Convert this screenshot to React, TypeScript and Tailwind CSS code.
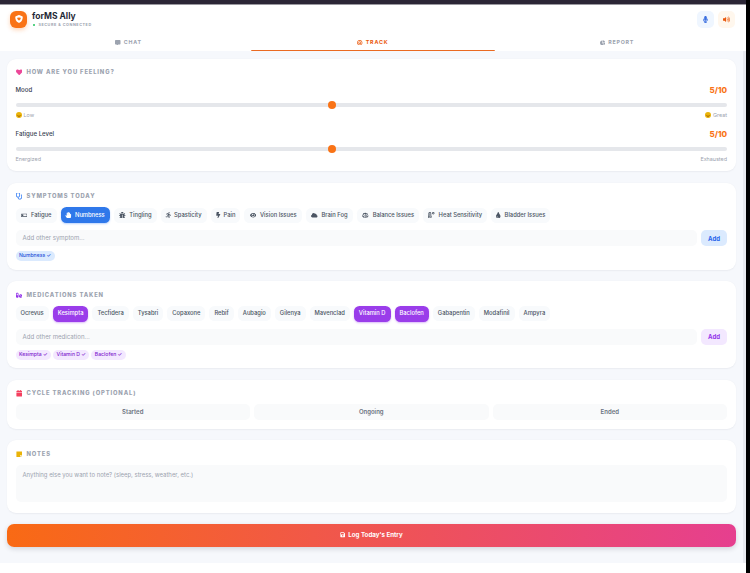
import {
  FaBalanceScale,
  FaBatteryQuarter,
  FaBolt,
  FaBug,
  FaBullseye,
  FaCalendar,
  FaChartPie,
  FaCloud,
  FaCommentAlt,
  FaEye,
  FaHandPaper,
  FaHeart,
  FaMicrophone,
  FaPills,
  FaRunning,
  FaSave,
  FaStethoscope,
  FaStickyNote,
  FaTemperatureHigh,
  FaTint,
  FaVolumeUp,
} from "react-icons/fa";
import { FaShieldHeart } from "react-icons/fa6";
import type { ReactNode } from "react";

const symptoms = [
  { name: "Fatigue", icon: <FaBatteryQuarter />, w: "w-[7px]" },
  { name: "Numbness", icon: <FaHandPaper />, w: "w-[6px]", on: true },
  { name: "Tingling", icon: <FaBug />, w: "w-[7px]" },
  { name: "Spasticity", icon: <FaRunning />, w: "w-[5px]" },
  { name: "Pain", icon: <FaBolt />, w: "w-[4.5px]" },
  { name: "Vision Issues", icon: <FaEye />, w: "w-[7px]" },
  { name: "Brain Fog", icon: <FaCloud />, w: "w-[7.5px]" },
  { name: "Balance Issues", icon: <FaBalanceScale />, w: "w-[7.5px]" },
  { name: "Heat Sensitivity", icon: <FaTemperatureHigh />, w: "w-[7px]" },
  { name: "Bladder Issues", icon: <FaTint />, w: "w-[5px]" },
];

const meds = [
  { name: "Ocrevus" },
  { name: "Kesimpta", on: true },
  { name: "Tecfidera" },
  { name: "Tysabri" },
  { name: "Copaxone" },
  { name: "Rebif" },
  { name: "Aubagio" },
  { name: "Gilenya" },
  { name: "Mavenclad" },
  { name: "Vitamin D", on: true },
  { name: "Baclofen", on: true },
  { name: "Gabapentin" },
  { name: "Modafinil" },
  { name: "Ampyra" },
];

function Card({ title, icon, className, children }: { title: string; icon: ReactNode; className: string; children: ReactNode }) {
  return (
    <section className={`rounded-[9px] bg-white px-[9px] shadow-[0_0.5px_1.5px_rgba(15,23,42,0.05)] ${className}`}>
      <h2 className="flex h-[8px] items-center gap-[4.5px] text-[5.8px] font-extrabold tracking-[0.15em] text-[#9ca3af]">
        <span className="flex text-[6.5px]">{icon}</span>
        {title}
      </h2>
      {children}
    </section>
  );
}

function Face({ mouth }: { mouth: string }) {
  return (
    <svg width="6" height="6" viewBox="0 0 12 12">
      <circle cx="6" cy="6" r="6" fill="#eab308" />
      <path d={mouth} fill="none" stroke="#78350f" strokeWidth="1.4" />
    </svg>
  );
}

function Slider({ label, left, right }: { label: string; left: ReactNode; right: ReactNode }) {
  return (
    <div>
      <div className="flex h-[10px] items-center justify-between">
        <span className="text-[6.1px] font-medium text-[#374151]">{label}</span>
        <span className="text-[8px] font-extrabold text-[#f97316]">5/10</span>
      </div>
      <div className="relative mt-[8.5px] h-[3.5px] rounded-full bg-[#e5e7eb]">
        <span className="absolute left-[312px] top-[-2.5px] h-[8.5px] w-[8.5px] rounded-full bg-[#f97316]" />
      </div>
      <div className="mt-[5px] flex h-[7px] items-center justify-between text-[5.4px] text-[#9ca3af]">
        {left}
        {right}
      </div>
    </div>
  );
}

function Chip({ name, icon, w, on, tone }: { name: string; icon?: ReactNode; w?: string; on?: boolean; tone: "blue" | "purple" }) {
  const active =
    tone === "blue"
      ? "h-[16px] bg-[#2f78ea] text-white shadow-[0_1px_2px_rgba(59,130,246,0.35)]"
      : "h-[16px] bg-[#9a3dea] text-white shadow-[0_1px_2px_rgba(147,51,234,0.35)]";
  return (
    <span
      className={`flex items-center gap-[3.5px] rounded-[5.5px] px-[5px] text-[5.8px] font-medium ${on ? active : "h-[15px] bg-[#f8fafc] text-[#4b5563]"}`}
    >
      {icon && <span className={`flex justify-center text-[6.5px] [&>svg]:shrink-0 ${w}`}>{icon}</span>}
      {name}
    </span>
  );
}

function AddRow({ placeholder, addClass }: { placeholder: string; addClass: string }) {
  return (
    <div className="mt-[7px] flex gap-[4px]">
      <div className="flex h-[16px] flex-1 items-center rounded-[5px] bg-[#f9fafb] px-[7px] text-[6.1px] text-[#9ca3af]">{placeholder}</div>
      <span className={`flex h-[16px] w-[26px] items-center justify-center rounded-[5px] text-[6px] font-bold ${addClass}`}>Add</span>
    </div>
  );
}

function Tab({ label, icon, active }: { label: string; icon: ReactNode; active?: boolean }) {
  return (
    <div
      className={`flex flex-1 items-center justify-center gap-[3px] border-b-[1.7px] pt-[2px] text-[5.3px] font-bold tracking-[0.15em] ${active ? "rounded-b-[1px] border-[#ea6a22] text-[#ea580c]" : "border-transparent text-[#9ca3af]"}`}
    >
      <span className="flex text-[5.5px]">{icon}</span>
      {label}
    </div>
  );
}

export default function App() {
  return (
    <div className="flex h-[573px] w-[750px] overflow-hidden bg-black font-['Inter',sans-serif]">
      <div className="flex w-[745.5px] flex-col bg-white">
        <div className="h-[4px] bg-[#2b2636]" />
        <div className="h-px bg-[#9a99a0]" />

        <header className="flex h-[28px] items-center justify-between pl-[10px] pr-[10.5px]">
          <div className="flex items-center gap-[5px]">
            <div className="flex h-[17px] w-[17px] items-center justify-center rounded-[6px] bg-[#f97316] text-[8px] text-white shadow-[0_2px_4px_rgba(249,115,22,0.3)]">
              <FaShieldHeart />
            </div>
            <div>
              <div className="text-[8.5px] font-bold leading-[10px] text-[#1f2937]">forMS Ally</div>
              <div className="mt-[1.5px] flex items-center gap-[3.5px] text-[3.75px] font-bold leading-[5px] tracking-[0.15em] text-[#9ca3af]">
                <span className="ml-[0.5px] h-[2.4px] w-[2.4px] rounded-full bg-[#22c55e]" />
                SECURE &amp; CONNECTED
              </div>
            </div>
          </div>
          <div className="flex gap-[4px]">
            <span className="flex h-[17px] w-[17px] items-center justify-center rounded-[5px] bg-[#eff6ff] text-[7px] text-[#3b6fe0]">
              <FaMicrophone />
            </span>
            <span className="flex h-[17px] w-[17px] items-center justify-center rounded-[5px] bg-[#fff7ed] text-[7px] text-[#ea580c]">
              <FaVolumeUp />
            </span>
          </div>
        </header>

        <nav className="flex h-[18px] px-[6.5px]">
          <Tab label="CHAT" icon={<FaCommentAlt />} />
          <Tab label="TRACK" icon={<FaBullseye />} active />
          <Tab label="REPORT" icon={<FaChartPie />} />
        </nav>

        <div className="flex min-h-0 flex-1">
          <main className="flex flex-1 flex-col gap-[11.5px] bg-[#f6f8fc] pl-[6.5px] pr-[7px] pt-[8px]">
            <Card title="HOW ARE YOU FEELING?" icon={<FaHeart className="text-[#ec4899]" />} className="h-[112px] pt-[9px]">
              <div className="mt-[8.5px] flex flex-col gap-[10px]">
                <Slider
                  label="Mood"
                  left={<span className="flex items-center gap-[2px]"><Face mouth="M3 7c1.5 2 4.500 2 6 0" />Low</span>}
                  right={<span className="flex items-center gap-[2px]"><Face mouth="M3 7c1.5 2 4.500 2 6 0" />Great</span>}
                />
                <Slider label="Fatigue Level" left={<span>Energized</span>} right={<span>Exhausted</span>} />
              </div>
            </Card>

            <Card title="SYMPTOMS TODAY" icon={<FaStethoscope className="text-[#3b82f6]" />} className="h-[87px] pt-[10px]">
              <div className="mt-[6.5px] flex h-[16px] items-center gap-[4px]">
                {symptoms.map((s) => (
                  <Chip key={s.name} name={s.name} icon={s.icon} w={s.w} on={s.on} tone="blue" />
                ))}
              </div>
              <AddRow placeholder="Add other symptom..." addClass="bg-[#dbeafe] text-[#2563eb]" />
              <div className="mt-[5px] flex">
                <span className="flex h-[10px] items-center rounded-full bg-[#dbeafe] px-[3.5px] text-[5.1px] font-medium text-[#1d4ed8]">Numbness ✓</span>
              </div>
            </Card>

            <Card title="MEDICATIONS TAKEN" icon={<FaPills className="text-[#9333ea]" />} className="h-[87px] pt-[10px]">
              <div className="mt-[6.5px] flex h-[16px] items-center gap-[4px]">
                {meds.map((m) => (
                  <Chip key={m.name} name={m.name} on={m.on} tone="purple" />
                ))}
              </div>
              <AddRow placeholder="Add other medication..." addClass="bg-[#f3e8ff] text-[#9333ea]" />
              <div className="mt-[5px] flex gap-[2px]">
                {["Kesimpta", "Vitamin D", "Baclofen"].map((t) => (
                  <span key={t} className="flex h-[10px] items-center rounded-full bg-[#f3e8ff] px-[3.5px] text-[5.1px] font-medium text-[#7e22ce]">
                    {t} ✓
                  </span>
                ))}
              </div>
            </Card>

            <Card title="CYCLE TRACKING (OPTIONAL)" icon={<FaCalendar className="text-[#f43f5e]" />} className="h-[49px] pt-[10px]">
              <div className="mt-[6px] flex gap-[4px]">
                {["Started", "Ongoing", "Ended"].map((c) => (
                  <span key={c} className="flex h-[16px] flex-1 items-center justify-center rounded-[5px] bg-[#f9fafb] text-[6px] font-semibold text-[#6b7280]">
                    {c}
                  </span>
                ))}
              </div>
            </Card>

            <Card title="NOTES" icon={<FaStickyNote className="text-[#eab308]" />} className="h-[73px] pt-[10px]">
              <div className="mt-[6.5px] h-[37px] rounded-[5px] bg-[#f9fafb] px-[7px] py-[6px] text-[5.95px] leading-[7px] text-[#9ca3af]">
                Anything else you want to note? (sleep, stress, weather, etc.)
              </div>
            </Card>

            <button className="-mt-[1px] flex h-[23px] w-full shrink-0 items-center justify-center gap-[3px] rounded-[7px] bg-linear-to-r/srgb from-[#f96a14] to-[#e63f8f] text-[6.2px] font-bold text-white shadow-[0_2px_5px_rgba(15,23,42,0.15)]">
              <FaSave className="text-[5.5px]" />
              Log Today's Entry
            </button>
          </main>
          <div className="w-[2.5px] bg-[#e8eaef]" />
        </div>

        <footer className="h-[10px] bg-white" />
      </div>
    </div>
  );
}
